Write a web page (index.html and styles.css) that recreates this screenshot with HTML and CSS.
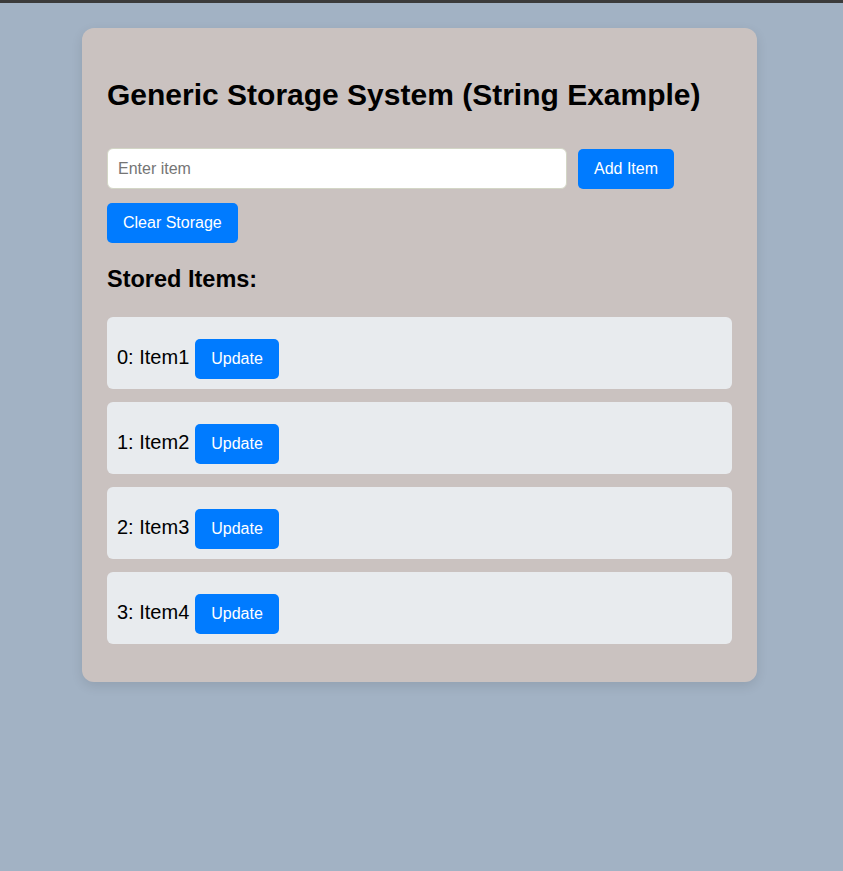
FILE: index.html
```html
<!DOCTYPE html>
<html lang="en">
<head>
<meta charset="utf-8">
<title>Generic Storage System</title>
<link rel="stylesheet" href="styles.css">
</head>
<body>
<div class="topbar"></div>
<div class="card">
  <h1 class="title">Generic Storage System (String Example)</h1>
  <div class="controls">
    <input class="item-input" type="text" placeholder="Enter item">
    <button class="btn">Add Item</button>
    <button class="btn">Clear Storage</button>
  </div>
  <h2 class="subtitle">Stored Items:</h2>
  <ul class="items">
    <li class="item"><span class="item-text">0: Item1</span><button class="btn">Update</button></li>
    <li class="item"><span class="item-text">1: Item2</span><button class="btn">Update</button></li>
    <li class="item"><span class="item-text">2: Item3</span><button class="btn">Update</button></li>
    <li class="item"><span class="item-text">3: Item4</span><button class="btn">Update</button></li>
  </ul>
</div>
</body>
</html>
```

FILE: styles.css
```css
html, body {
  margin: 0;
  padding: 0;
}
body {
  background: #a2b2c4;
  font-family: "Liberation Sans", Arial, sans-serif;
  color: #000;
  min-height: 871px;
}
.topbar {
  height: 3px;
  background: #3b3b3b;
}
.card {
  width: 675px;
  box-sizing: border-box;
  margin: 25px 0 0 82px;
  padding: 25px;
  background: #cac2c0;
  border-radius: 12px;
  box-shadow: 0 4px 12px rgba(0, 0, 0, 0.1);
}
.title {
  margin: 25px 0 0;
  font-size: 30px;
  line-height: 34px;
  font-weight: bold;
}
.controls {
  margin-top: 36px;
  display: flex;
  flex-wrap: wrap;
  align-items: center;
  column-gap: 11px;
  row-gap: 14px;
}
.item-input {
  width: 460px;
  height: 41px;
  box-sizing: border-box;
  padding: 0 10px;
  border: 1px solid #d3d6c6;
  border-radius: 6px;
  background: #fff;
  font-family: "Liberation Sans", Arial, sans-serif;
  font-size: 16px;
  color: #000;
  outline: none;
}
.item-input::placeholder {
  color: #757575;
}
.btn {
  height: 40px;
  box-sizing: border-box;
  padding: 0 16px;
  border: none;
  border-radius: 5px;
  background: #007bff;
  color: #fff;
  font-family: "Liberation Sans", Arial, sans-serif;
  font-size: 16px;
  line-height: 40px;
  cursor: pointer;
}
.subtitle {
  margin: 23px 0 0;
  font-size: 23.5px;
  line-height: 27px;
  font-weight: bold;
}
.items {
  list-style: none;
  margin: 24px 0 0;
  padding: 0;
}
.item {
  display: flex;
  align-items: baseline;
  height: 72px;
  box-sizing: border-box;
  padding: 22px 10px 10px;
  margin-bottom: 13px;
  background: #e8ebee;
  border-radius: 6px;
  font-size: 20px;
}
.item-text {
  margin-right: 6px;
}
```
